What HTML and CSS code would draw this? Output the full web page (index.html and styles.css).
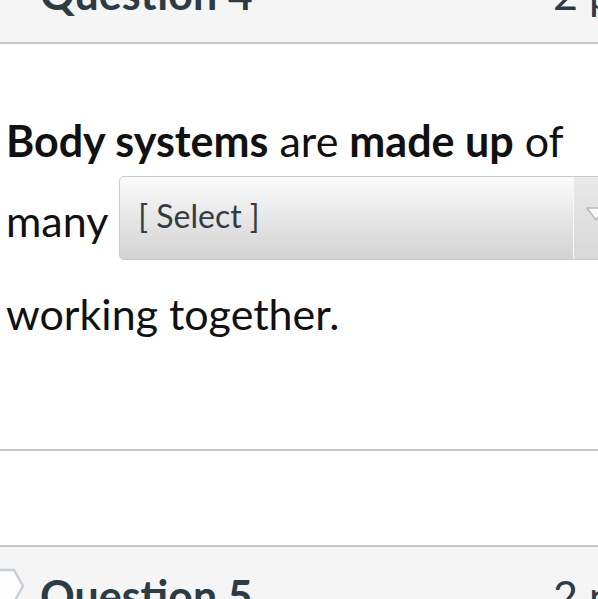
FILE: index.html
```html
<!DOCTYPE html>
<html>
<head>
<meta charset="utf-8">
<link rel="stylesheet" href="styles.css">
</head>
<body>
<div class="quiz">
  <div class="question">
    <div class="q-header">
      <span class="q-title">Question 4</span>
      <span class="q-points">2 pts</span>
    </div>
    <div class="q-body">
      <p class="q-text"><strong>Body systems</strong> are <strong>made up</strong> of <span class="nowrap">many <span class="select"><span class="select-value">[ Select ]</span><span class="select-arrow"><svg width="20" height="14" viewBox="0 0 20 14"><path d="M1 1 L19 1 L10 13 Z" fill="#fafafa" stroke="#b9b9b9" stroke-width="1.5"/></svg></span></span></span> working together.</p>
    </div>
  </div>
  <div class="spacer"></div>
  <div class="question">
    <div class="q-header q-header-next">
      <svg class="flag" width="26" height="40" viewBox="0 0 26 40"><path d="M-4 2 L14 2 L23 18 L14 34 L-4 34" fill="#fcfcfd" stroke="#c6ced6" stroke-width="2.5"/></svg>
      <span class="q-title">Question 5</span>
      <span class="q-points">2 pts</span>
    </div>
  </div>
</div>
</body>
</html>
```
FILE: styles.css
```css
html, body {
  margin: 0;
  padding: 0;
  overflow: hidden;
  background: #ffffff;
}
.quiz {
  width: 700px;
  font-family: Lato, "Liberation Sans", sans-serif;
}
.q-header {
  position: relative;
  display: flex;
  background: #f5f5f5;
  border-bottom: 2px solid #c6c6c6;
  padding: 22px 0 22px 40px;
  margin-top: -55px;
  font-size: 43px;
  font-weight: 700;
  line-height: 53px;
  color: #2d3b45;
}
.q-header-next {
  margin-top: 0;
  border-top: 2px solid #c6c6c6;
  border-bottom: none;
}
.q-title {
  width: 513px;
}
.q-points {
  font-weight: 400;
  color: #2d3b45;
}
.flag {
  position: absolute;
  left: 0;
  top: 21px;
}
.q-body {
  padding: 65px 0 103px 6px;
  border-bottom: 2px solid #c6c6c6;
}
.q-text {
  margin: 0;
  font-size: 43px;
  line-height: 64px;
  color: #111111;
  width: 585px;
}
.q-text strong {
  font-weight: 700;
}
.nowrap {
  white-space: nowrap;
}
.select {
  display: inline-flex;
  vertical-align: 9px;
  margin: 3px 0 22px 1px;
  height: 84px;
  box-sizing: border-box;
  border: 1px solid #c9c9c9;
  border-radius: 5px;
  background: linear-gradient(#fbfbfb, #d2d2d2);
  overflow: hidden;
}
.select-value {
  width: 435px;
  padding: 0 0 4px 18px;
  font-size: 32px;
  line-height: 78px;
  color: #333b42;
  font-weight: 400;
}
.select-arrow {
  width: 60px;
  border-left: 1px solid #f7f7f7;
  background: linear-gradient(#e9e9e9, #d8d8d8);
  display: flex;
  align-items: center;
  padding-left: 12px;
  padding-bottom: 8px;
}
.spacer {
  height: 94px;
}
```
